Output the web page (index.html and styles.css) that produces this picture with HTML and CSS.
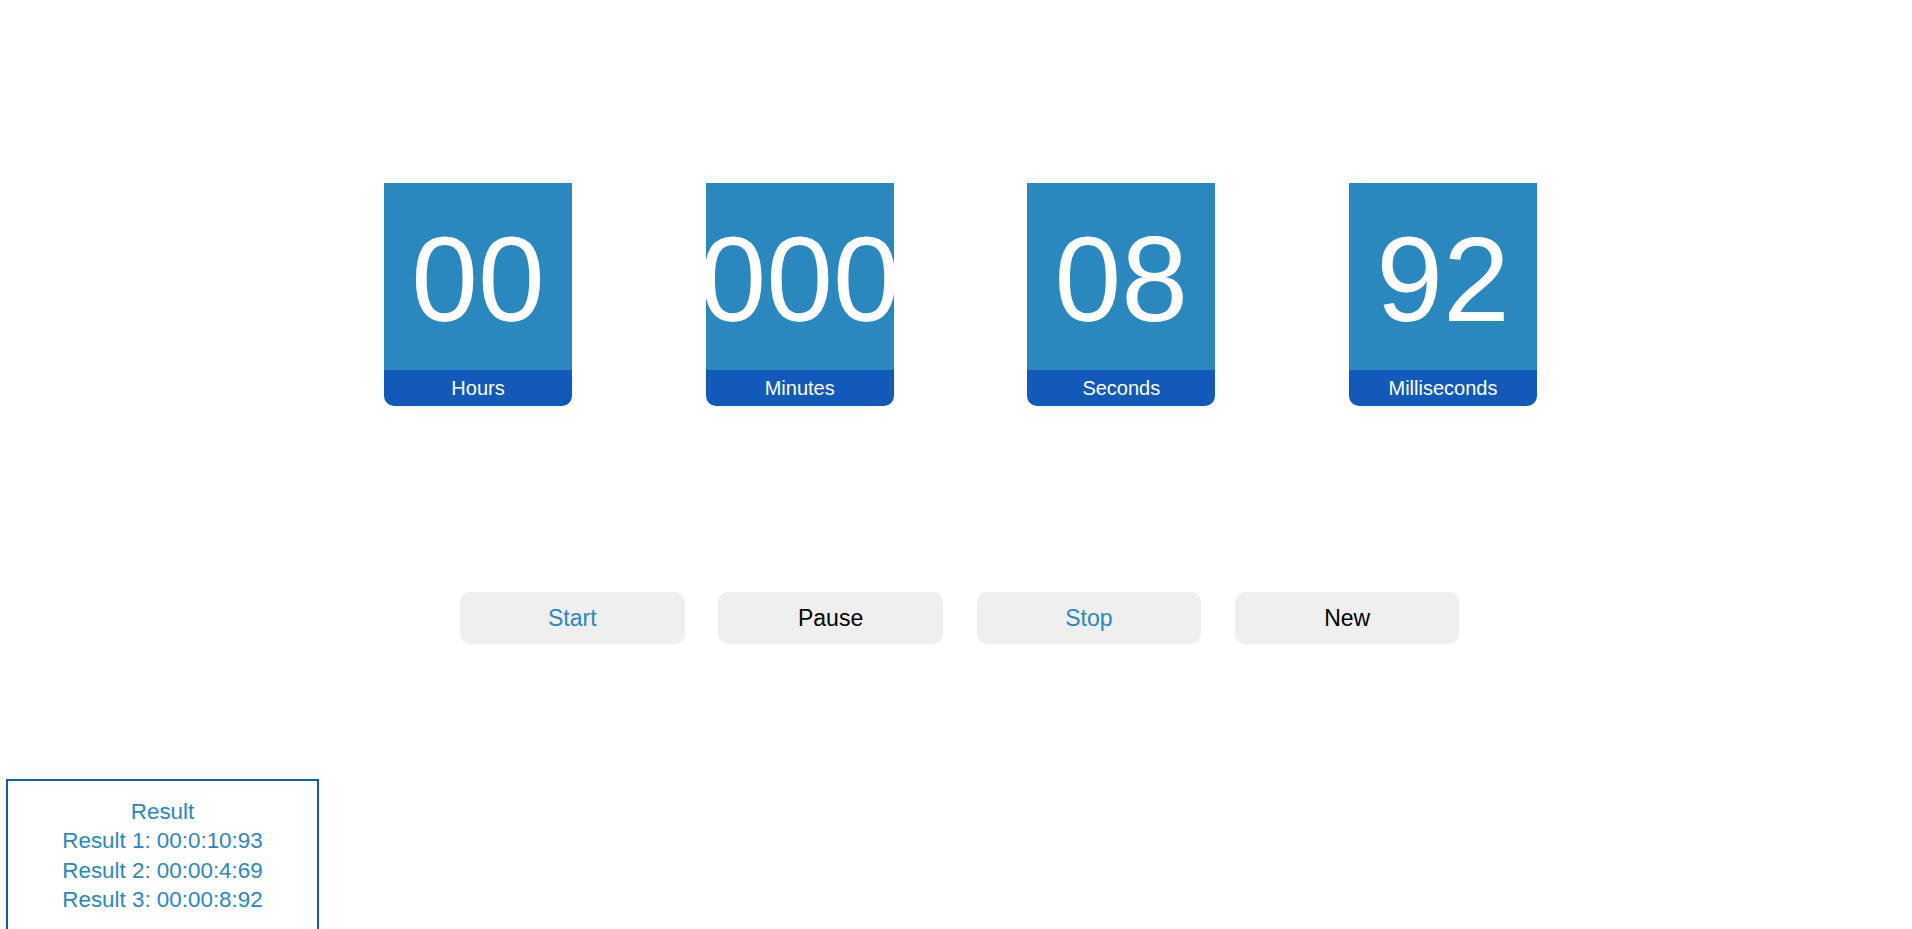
FILE: index.html
```html
<!DOCTYPE html>
<html lang="en">
<head>
<meta charset="utf-8">
<title>Stopwatch</title>
<link rel="stylesheet" href="styles.css">
</head>
<body>
<div class="app">
  <div class="cards">
    <div class="card">
      <div class="card-value">00</div>
      <div class="card-label">Hours</div>
    </div>
    <div class="card">
      <div class="card-value">000</div>
      <div class="card-label">Minutes</div>
    </div>
    <div class="card">
      <div class="card-value">08</div>
      <div class="card-label">Seconds</div>
    </div>
    <div class="card">
      <div class="card-value">92</div>
      <div class="card-label">Milliseconds</div>
    </div>
  </div>
  <div class="controls">
    <button class="btn btn-accent">Start</button>
    <button class="btn">Pause</button>
    <button class="btn btn-accent">Stop</button>
    <button class="btn">New</button>
  </div>
  <div class="results">
    <div class="result-line">Result</div>
    <div class="result-line">Result 1: 00:0:10:93</div>
    <div class="result-line">Result 2: 00:00:4:69</div>
    <div class="result-line">Result 3: 00:00:8:92</div>
  </div>
</div>
</body>
</html>
```
FILE: styles.css
```css
html, body {
  margin: 0;
  padding: 0;
  background: #ffffff;
}

body {
  font-family: "Liberation Sans", Arial, sans-serif;
}

.app {
  padding-top: 183px;
}

.cards {
  display: flex;
  justify-content: center;
  gap: 133.67px;
  padding-left: 9px;
}

.card {
  width: 188px;
  border-radius: 0 0 10px 10px;
}

.card-value {
  box-sizing: border-box;
  height: 187px;
  padding-top: 27px;
  background: #2b88be;
  color: #ffffff;
  font-size: 120px;
  line-height: normal;
  display: flex;
  justify-content: center;
  white-space: nowrap;
}

.card-label {
  height: 36px;
  line-height: 36px;
  background: #1259b9;
  color: #ffffff;
  font-size: 20px;
  text-align: center;
  border-radius: 0 0 10px 10px;
}

.controls {
  display: flex;
  justify-content: center;
  gap: 33.8px;
  padding-left: 7.5px;
  margin-top: 186px;
}

.btn {
  width: 224.5px;
  height: 52px;
  border: none;
  border-radius: 10px;
  background: #efefef;
  color: #000000;
  font-family: "Liberation Sans", Arial, sans-serif;
  font-size: 23px;
  padding: 0;
}

.btn-accent {
  color: #2b88be;
}

.results {
  width: 309px;
  margin-top: 135px;
  margin-left: 6px;
  border: 2px solid #1259b9;
  padding: 16px 0;
  text-align: center;
  color: #2b88be;
  font-size: 22.4px;
}

.result-line {
  line-height: 29.3px;
}
```
